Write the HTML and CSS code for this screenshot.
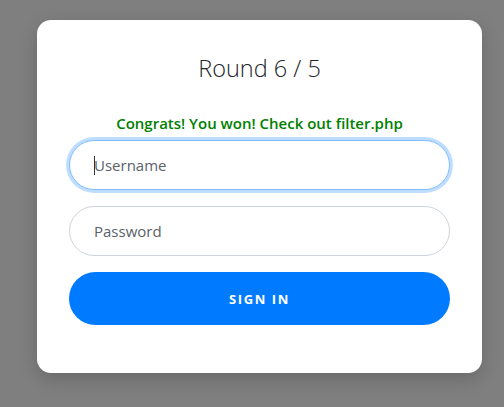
FILE: index.html
```html
<!DOCTYPE html>
<html lang="en">
<head>
<meta charset="utf-8">
<title>Round 6 / 5</title>
<link rel="stylesheet" href="styles.css">
</head>
<body>
<div class="page">
  <form class="card">
    <h3 class="title">Round 6 / 5</h3>
    <p class="message">Congrats! You won! Check out filter.php</p>
    <div class="field focused">
      <span class="caret"></span>
      <input class="input" type="text" placeholder="Username">
    </div>
    <div class="field">
      <input class="input" type="password" placeholder="Password">
    </div>
    <button class="btn" type="button">Sign in</button>
  </form>
</div>
</body>
</html>
```

FILE: styles.css
```css
html, body {
  margin: 0;
  padding: 0;
}
body {
  background: #7f7f7f;
  font-family: "Segoe UI", "Open Sans", "Noto Sans", sans-serif;
  width: 504px;
  height: 407px;
  overflow: hidden;
}
.page {
  padding: 20px 0 0 37px;
}
.card {
  box-sizing: border-box;
  width: 445px;
  height: 353px;
  background: #fff;
  border-radius: 14px;
  padding: 28px 32px 0 32px;
  box-shadow: 0 6px 18px rgba(0, 0, 0, 0.18);
  display: flex;
  flex-direction: column;
}
.title {
  margin: 0;
  text-align: center;
  font-family: "Open Sans", sans-serif;
  font-size: 23.5px;
  font-weight: 300;
  line-height: 40px;
  color: #212529;
}
.message {
  margin: 24px 0 6px 0;
  text-align: center;
  color: #008000;
  font-size: 15px;
  font-weight: 600;
  line-height: 22px;
}
.field {
  position: relative;
  margin-bottom: 16px;
}
.input {
  box-sizing: border-box;
  display: block;
  width: 100%;
  height: 50px;
  border: 1px solid #ced4da;
  border-radius: 25px;
  padding: 0 24px;
  font-family: inherit;
  font-size: 15px;
  color: #495057;
  background: #fff;
  outline: none;
}
.input::placeholder {
  color: #5a6169;
  opacity: 1;
}
.focused .input {
  border-color: #80bdff;
  box-shadow: 0 0 0 3px rgba(0, 123, 255, 0.25);
}
.caret {
  position: absolute;
  left: 25px;
  top: 16px;
  width: 1px;
  height: 19px;
  background: #333;
  z-index: 1;
}
.btn {
  margin-top: 0;
  height: 53px;
  border: none;
  border-radius: 27px;
  background: #007bff;
  color: #fff;
  font-family: inherit;
  font-size: 13px;
  font-weight: 700;
  letter-spacing: 1.6px;
  text-transform: uppercase;
}
```
